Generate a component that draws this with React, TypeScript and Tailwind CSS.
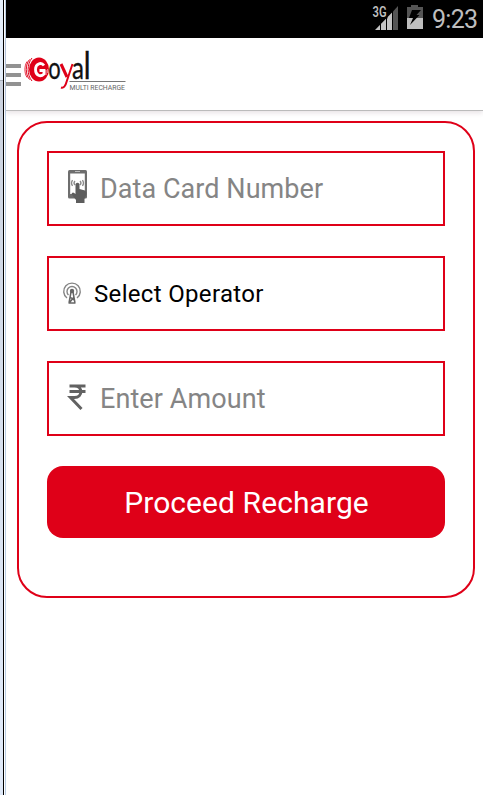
import type { ReactNode } from 'react'

function StatusBar() {
  return (
    <div className="flex h-[38px] items-start justify-end bg-black">
      <svg className="mt-1 h-7 w-[60px]" viewBox="0 0 60 28">
        {/* Signal strength */}
        <path d="M9 26L27 7.500V26Z" fill="#c4c4c4" />
        <path d="M27 7.500L32 2V26H27Z" fill="#555" />
        <path d="M14.500 12V26M20.500 12V26M26.500 3V26" stroke="#000" strokeWidth="1" />
        <path d="M5 1H21.500V14.500H5Z" fill="#000" />
        <text
          x="6.500"
          y="13"
          fill="#bebebe"
          fontFamily="Roboto, sans-serif"
          fontSize="14"
          fontWeight="600"
          textLength="14"
          lengthAdjust="spacingAndGlyphs"
        >
          3G
        </text>
        {/* Battery */}
        <path d="M41 3H45V1H52V3H57V14H41Z" fill="#555" />
        <path d="M41 14H57V25H41Z" fill="#bebebe" />
        <path d="M46 6H55L50.500 11H53.500L44 21L47 14H43Z" fill="#000" />
      </svg>
      <span className="mr-[5px] ml-[6px] w-[46px] whitespace-nowrap text-[25px] leading-[40px] tracking-[-0.7px] text-[#bebebe]">
        9:23
      </span>
    </div>
  )
}

function Logo() {
  return (
    <svg className="ml-[3px] h-[46px] w-[106px] overflow-visible" viewBox="0 0 106 46">
      <ellipse cx="15" cy="21.500" rx="10" ry="12" fill="#df0018" />
      <g fill="none" stroke="#df0018" strokeWidth="1">
        <path d="M8 10C2.800 16 2.800 27 8 33" />
        <path d="M5.500 11.500C1.200 17 1.200 26 5.500 31.500" />
        <path d="M3 13.500C0.200 18 0.200 25 3 29.500" strokeWidth="0.800" />
      </g>
      <path d="M20 17.500C17 13.500 11.500 16 11.500 21.500C11.500 27.500 16.500 29.500 20 26V22.500H15.500" fill="none" stroke="#fff" strokeWidth="2.800" />
      <path d="M22 22V27M23.800 21V25" stroke="#fff" strokeWidth="0.700" />
      <g fontFamily="Lato, sans-serif" fill="#111" stroke="#111" strokeWidth="0.300">
        <text transform="translate(24.200 31.200) scale(.73 1)" fontSize="30">o</text>
        <text transform="translate(48 31.200) scale(.8 1)" fontSize="30">a</text>
        <text transform="translate(59.600 31.200) scale(.8 1)" fontSize="38.500">l</text>
      </g>
      <path d="M37 16L43 29" fill="none" stroke="#df0018" strokeWidth="3" />
      <path d="M48.500 16L42.500 34C41.500 38 39.500 40.500 37 39.500" fill="none" stroke="#df0018" strokeWidth="2" />
      <path d="M45.500 33.500H101.500" stroke="#777" strokeWidth="1" />
      <text
        x="45.500"
        y="42"
        fill="#666"
        fontFamily="Roboto, sans-serif"
        fontSize="8"
        textLength="55.500"
        lengthAdjust="spacingAndGlyphs"
      >
        MULTI RECHARGE
      </text>
    </svg>
  )
}

function Header() {
  return (
    <header className="flex h-[73px] items-start border-b border-[#bbb] bg-white pt-[10px] shadow-[0_2px_5px_rgba(60,20,40,0.12)]">
      <div className="mt-4 flex w-[15px] flex-col gap-[5px]">
        <div className="h-1 bg-[#929292]" />
        <div className="h-1 bg-[#929292]" />
        <div className="h-1 bg-[#929292]" />
      </div>
      <Logo />
    </header>
  )
}

function PhoneIcon() {
  return (
    <svg className="mb-[3px] ml-[18px] mr-3 h-9 w-[21px]" viewBox="0 0 21 36">
      <rect x="1" y="1" width="19" height="28.500" rx="1.500" fill="#6e6e6e" />
      <path d="M3.200 4.500H17.800V25H3.200Z" fill="#fff" />
      <path d="M8 2.500H13" stroke="#bbb" strokeWidth="1" />
      <path
        d="M5.500 11Q3.500 14 5.500 17M8 12Q6 14 8 16M15.500 11Q17.500 14 15.500 17M13 12Q15 14 13 16"
        fill="none"
        stroke="#8a8a8a"
        strokeWidth="1.300"
      />
      <path
        d="M8.500 15Q10.500 12.500 12.500 15V20L18 21.500Q20 22.500 19.500 25L17.500 30V34H9V31L4.500 25Q5.500 22 8.500 25Z"
        fill="#5d5d5d"
      />
    </svg>
  )
}

function TowerIcon() {
  return (
    <svg className="mb-px ml-[13px] mr-3 h-6 w-5" viewBox="0 0 20 24">
      <g fill="none" stroke="#858585" strokeWidth="1.400">
        <path d="M5 17A8.300 8.300 0 1 1 15 17" />
        <path d="M6.500 14A5 5 0 1 1 13.500 14" />
      </g>
      <path
        d="M9 11L7 22M11 11L13 22M8 16L12 19M12 16L8 21M6.500 22H13.500"
        fill="none"
        stroke="#666"
        strokeWidth="1.500"
      />
      <circle cx="10" cy="10" r="2.200" fill="#666" />
    </svg>
  )
}

function RupeeIcon() {
  return (
    <svg className="mb-[3px] ml-[18px] mr-3 h-7 w-[21px]" viewBox="0 0 21 28">
      <path
        d="M2.500 3H18.500M2.500 8.500H18.500M3.500 3H7.500C16 3 16 14.500 7.500 14.500H3.500L14.500 26"
        fill="none"
        stroke="#626262"
        strokeWidth="3"
      />
    </svg>
  )
}

function Field({ icon, children }: { icon: ReactNode; children: ReactNode }) {
  return (
    <div className="flex h-[75px] items-center border-2 border-[#df0018] bg-white">
      {icon}
      {children}
    </div>
  )
}

export default function App() {
  return (
    <div className="flex h-[795px] w-[483px] overflow-hidden bg-white font-[Roboto,sans-serif]">
      {/* Emulator window frame */}
      <div className="flex w-[6px] shrink-0">
        <div className="w-[3px] bg-[#dfe9f8]">
          <div className="h-20 bg-[#e5effc]" />
          <div className="h-px bg-[#a8b0bc]" />
          <div className="h-[640px] bg-linear-to-b from-[#cbd2df] to-[#dfe9f8]" />
        </div>
        <div className="w-px bg-black" />
        <div className="w-px bg-white" />
        <div className="w-px bg-[#b9cde5]" />
      </div>

      <div className="w-[477px]">
        <StatusBar />
        <Header />
        <main className="ml-[11px] mt-[10px] flex h-[477px] w-[458px] flex-col gap-[30px] rounded-[30px] border-2 border-[#df0018] px-7 pt-7">
          <Field icon={<PhoneIcon />}>
            <span className="pt-0.5 text-[27px] tracking-[0.06px] text-[#858585]">Data Card Number</span>
          </Field>
          <Field icon={<TowerIcon />}>
            <span className="text-[24px] tracking-[0.33px] text-black">Select Operator</span>
          </Field>
          <Field icon={<RupeeIcon />}>
            <span className="pt-0.5 text-[27px] tracking-[0.09px] text-[#858585]">Enter Amount</span>
          </Field>
          <button className="h-[72px] rounded-[16px] bg-[#df0018] pl-px text-[30px] tracking-[0.08px] text-white">
            Proceed Recharge
          </button>
        </main>
      </div>
    </div>
  )
}
